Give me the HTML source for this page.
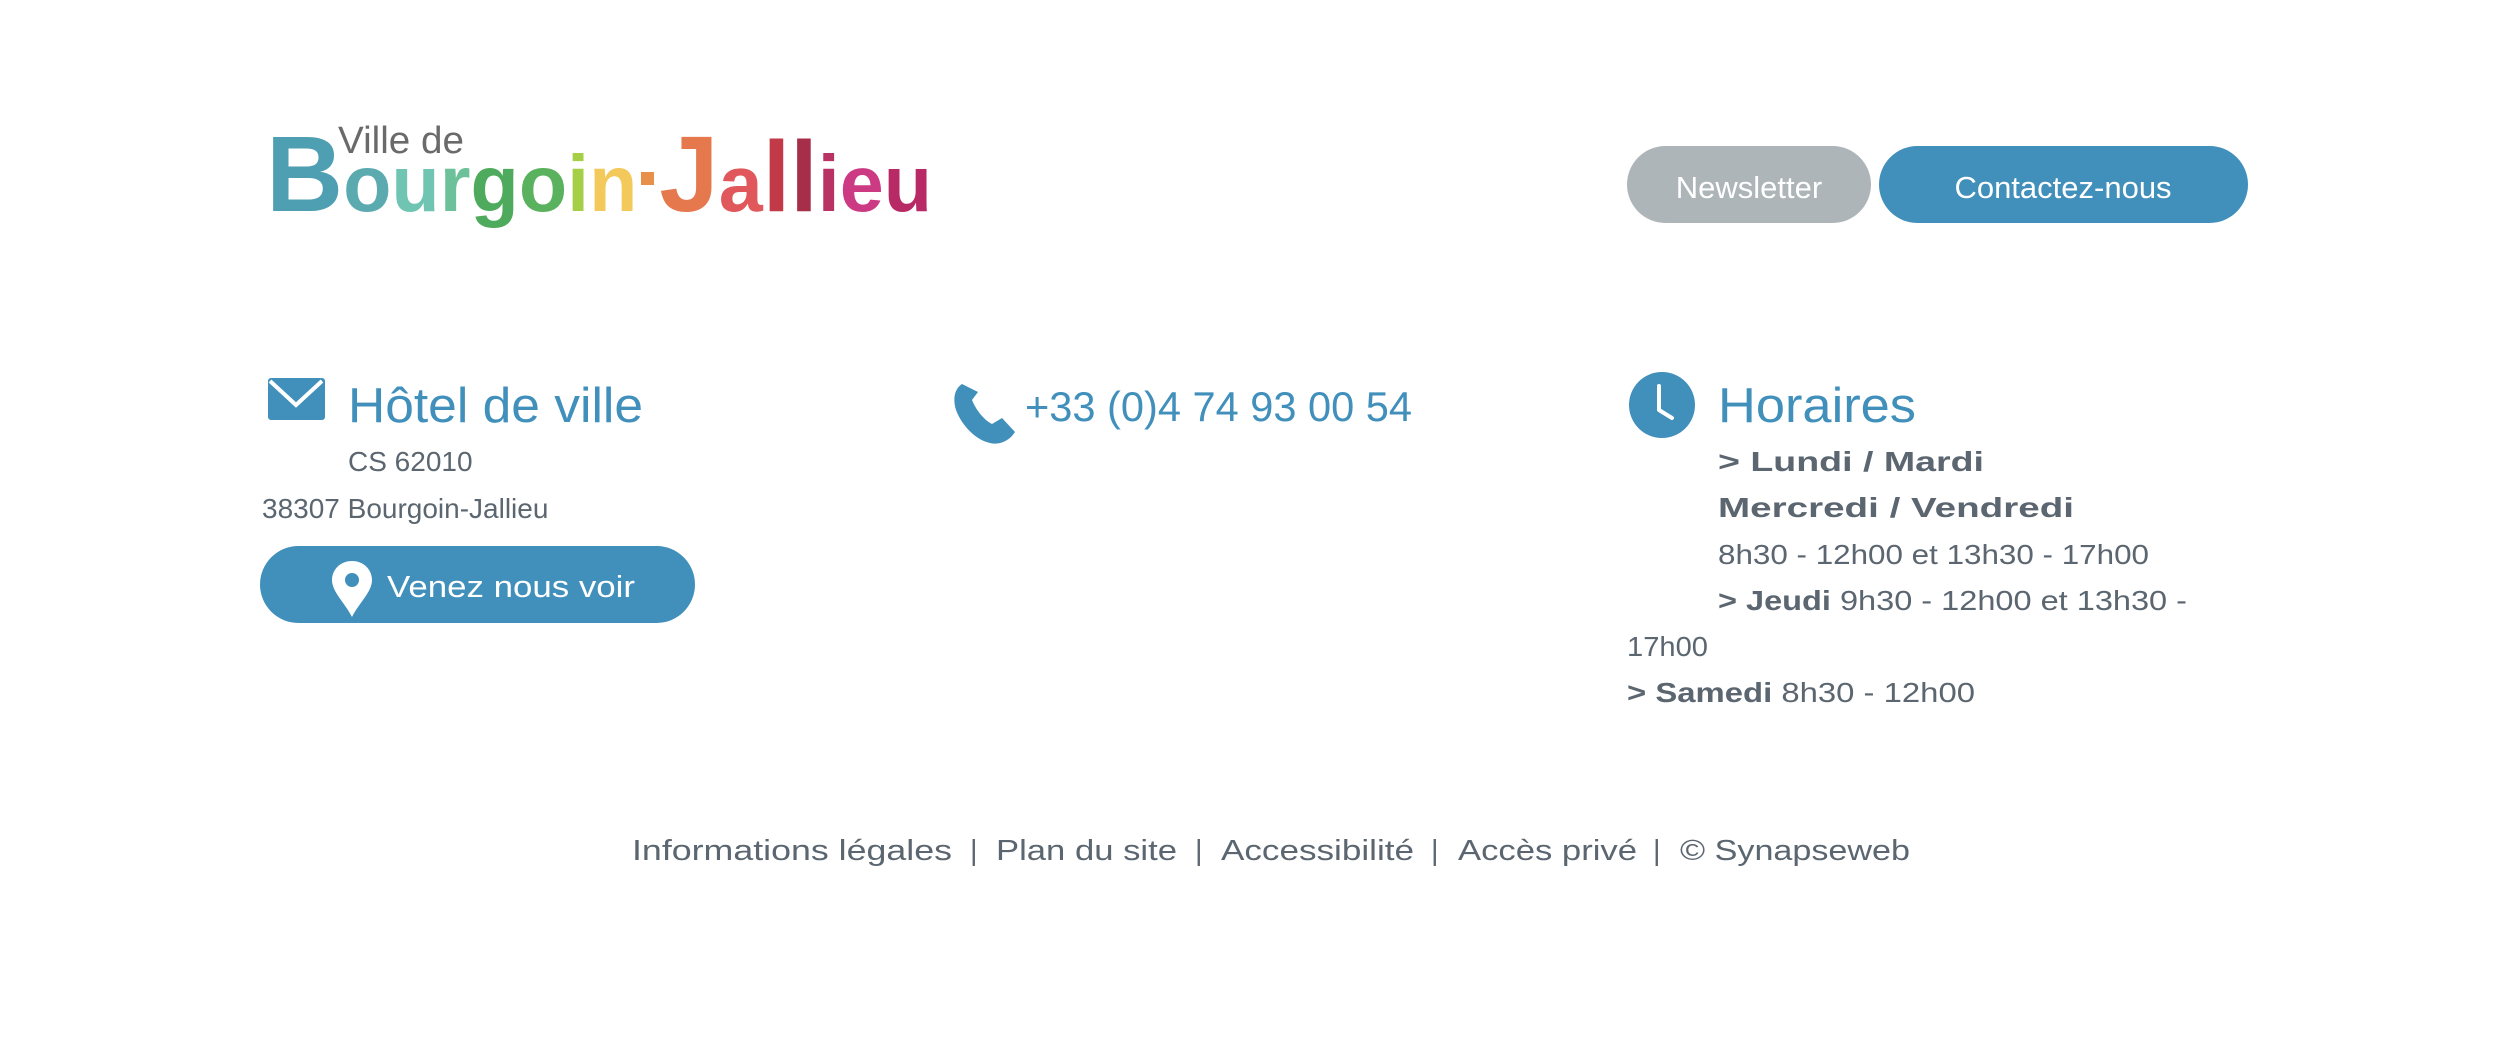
<!DOCTYPE html>
<html><head><meta charset="utf-8"><style>
html,body{margin:0;padding:0;background:#fff;width:2518px;height:1040px;overflow:hidden}
svg{display:block}
text{font-family:"Liberation Sans",sans-serif}
</style></head><body>
<svg width="2518" height="1040" viewBox="0 0 2518 1040" xmlns="http://www.w3.org/2000/svg">
<!-- Logo -->
<text x="338" y="153" font-size="38" fill="#6a6a6a" textLength="126" lengthAdjust="spacingAndGlyphs">Ville de</text>
<text x="266" y="211" font-size="80" font-weight="bold" textLength="666" lengthAdjust="spacingAndGlyphs"><tspan fill="#4f9fb2" font-size="108">B</tspan><tspan fill="#5aaab0">o</tspan><tspan fill="#70c4b2">u</tspan><tspan fill="#6cc09a">r</tspan><tspan fill="#4eaa5c">g</tspan><tspan fill="#5bb25e">o</tspan><tspan fill="#a6cf48">i</tspan><tspan fill="#f2c95a">n</tspan><tspan fill="#fff"> </tspan><tspan fill="#e6784e" font-size="108">J</tspan><tspan fill="#e0585c">a</tspan><tspan fill="#c23a48" font-size="100">l</tspan><tspan fill="#a62e48" font-size="100">l</tspan><tspan fill="#b83264">i</tspan><tspan fill="#cc3a84">e</tspan><tspan fill="#b82a66">u</tspan></text>
<rect x="641" y="172" width="13" height="13" fill="#e8904a"/>

<!-- Top buttons -->
<rect x="1627" y="146" width="244" height="77" rx="38.5" fill="#adb5b8"/>
<text x="1749" y="198" font-size="31" fill="#fff" text-anchor="middle">Newsletter</text>
<rect x="1879" y="146" width="369" height="77" rx="38.5" fill="#418fbb"/>
<text x="2063" y="198" font-size="31" fill="#fff" text-anchor="middle">Contactez-nous</text>

<!-- Envelope -->
<rect x="268" y="378" width="57" height="42" rx="3" fill="#418fbb"/>
<path d="M270 381 L296 405 L322 381" fill="none" stroke="#fff" stroke-width="4"/>
<text x="348" y="422" font-size="49" fill="#418fbb" textLength="295" lengthAdjust="spacingAndGlyphs">Hôtel de ville</text>
<text x="348" y="471" font-size="28" fill="#5b6670">CS 62010</text>
<text x="262" y="518" font-size="28" fill="#5b6670">38307 Bourgoin-Jallieu</text>

<!-- Venez button -->
<rect x="260" y="546" width="435" height="77" rx="38.5" fill="#418fbb"/>
<path d="M352 561 C340 561 332 570 332 580 C332 592 345 603 352 617 C359 603 372 592 372 580 C372 570 364 561 352 561 Z" fill="#fff"/>
<circle cx="352" cy="580" r="7" fill="#418fbb"/>
<text x="387" y="597" font-size="31" fill="#fff" textLength="248" lengthAdjust="spacingAndGlyphs">Venez nous voir</text>

<!-- Phone -->
<path d="M962 384 C956 388 952 396 956 410 C962 426 976 440 990 443 C998 445 1006 442 1012 436 L1015 432 L1002 418 L992 424 C984 420 976 410 972 400 L978 392 Z" fill="#418fbb"/>
<text x="1025" y="421" font-size="42" fill="#418fbb" textLength="387" lengthAdjust="spacingAndGlyphs">+33 (0)4 74 93 00 54</text>

<!-- Clock -->
<circle cx="1662" cy="405" r="33" fill="#418fbb"/>
<path d="M1659 386 L1659 410 L1672 418" fill="none" stroke="#fff" stroke-width="4" stroke-linecap="round" stroke-linejoin="round"/>
<text x="1718" y="422" font-size="49" fill="#418fbb" textLength="198" lengthAdjust="spacingAndGlyphs">Horaires</text>
<g font-size="28" fill="#5b6670">
<text x="1718" y="471" font-weight="bold" textLength="266" lengthAdjust="spacingAndGlyphs">&gt; Lundi / Mardi</text>
<text x="1718" y="517" font-weight="bold" textLength="356" lengthAdjust="spacingAndGlyphs">Mercredi / Vendredi</text>
<text x="1718" y="564" textLength="431" lengthAdjust="spacingAndGlyphs">8h30 - 12h00 et 13h30 - 17h00</text>
<text x="1718" y="610" textLength="469" lengthAdjust="spacingAndGlyphs"><tspan font-weight="bold">&gt; Jeudi</tspan> 9h30 - 12h00 et 13h30 -</text>
<text x="1627" y="656" textLength="81" lengthAdjust="spacingAndGlyphs">17h00</text>
<text x="1627" y="702" textLength="348" lengthAdjust="spacingAndGlyphs"><tspan font-weight="bold">&gt; Samedi</tspan> 8h30 - 12h00</text>
</g>

<!-- Footer -->
<g font-size="29" fill="#5b6670">
<text x="632" y="860" textLength="320" lengthAdjust="spacingAndGlyphs">Informations légales</text>
<text x="970" y="860">|</text>
<text x="996" y="860" textLength="181" lengthAdjust="spacingAndGlyphs">Plan du site</text>
<text x="1195" y="860">|</text>
<text x="1221" y="860" textLength="193" lengthAdjust="spacingAndGlyphs">Accessibilité</text>
<text x="1431" y="860">|</text>
<text x="1458" y="860" textLength="179" lengthAdjust="spacingAndGlyphs">Accès privé</text>
<text x="1653" y="860">|</text>
<text x="1680" y="860" textLength="230" lengthAdjust="spacingAndGlyphs">© Synapseweb</text>
</g>
</svg>
</body></html>
